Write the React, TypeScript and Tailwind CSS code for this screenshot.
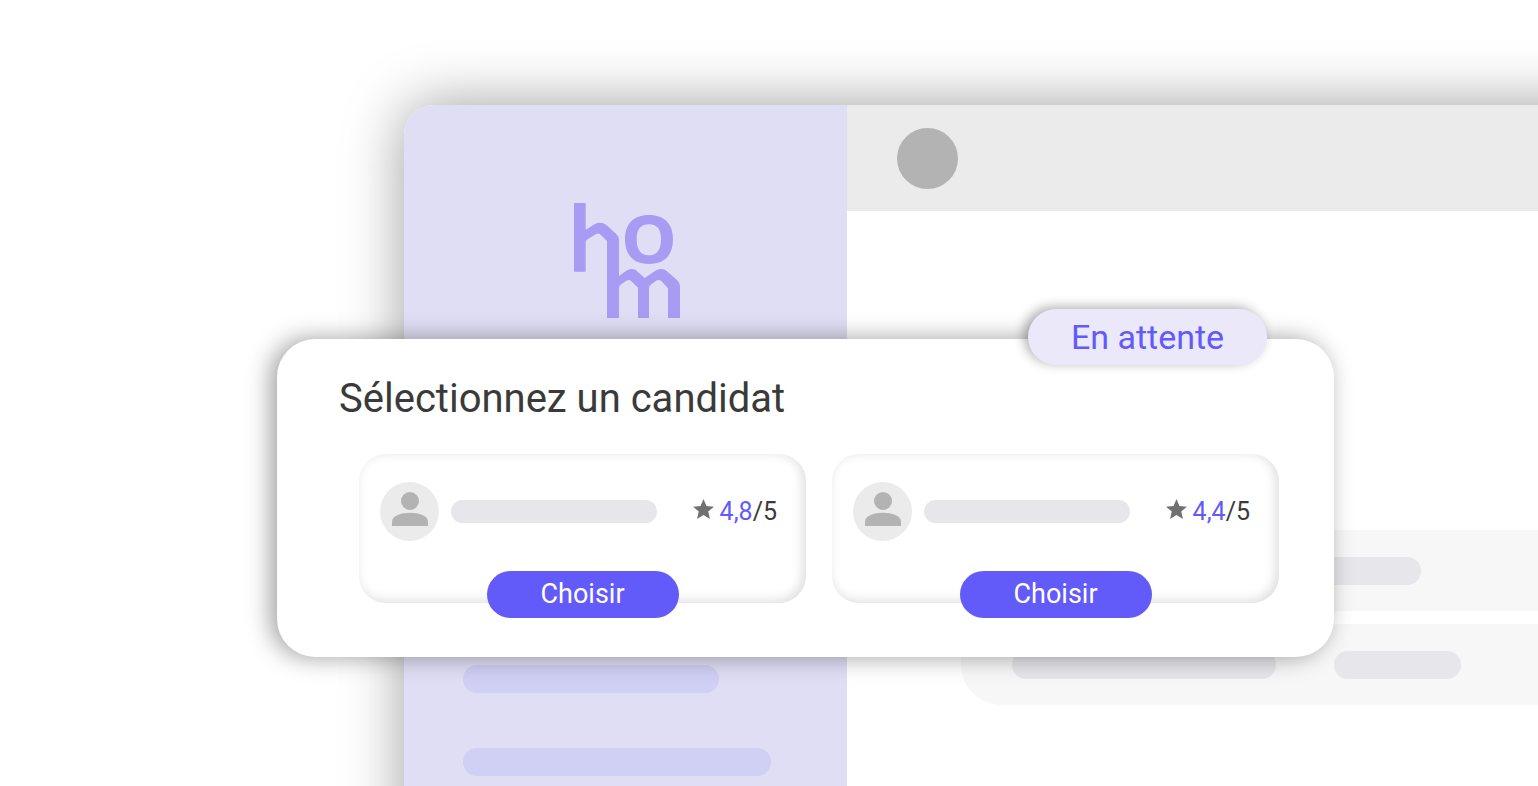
import React from 'react';
import { MdStar } from 'react-icons/md';

interface Candidate {
    id: number;
    rating: string;
}

const candidates: Candidate[] = [
    { id: 1, rating: '4,8' },
    { id: 2, rating: '4,4' },
];

function Logo() {
    return (
        <svg className="w-[106px] h-[115px] fill-[#a89bf4]" viewBox="42 39 318 345" role="img" aria-label="hom">
            <path d="M42 39H77V119L105 102Q122 94 138 104L168 131Q177 139 177 151V258L198 243Q213 232 228 241L254 264L286 242Q301 232 317 241L350 269Q360 278 360 290V384H324V295L307 276Q300 267 291 271L274 283Q267 288 267 295V384H234V293L216 275Q208 267 199 272L184 282Q177 287 177 293V384H141V153L122 134Q116 128 108 132L83 148Q77 152 77 156V245H42Z" />
            <path fillRule="evenodd" d="M267 75C314 75 339 102 339 148C339 195 314 222 267 222C220 222 195 195 195 148C195 102 220 75 267 75ZM267 103C241 103 230 119 230 148C230 179 241 196 267 196C292 196 303 179 303 148C303 119 292 103 267 103Z" />
        </svg>
    );
}

function Avatar() {
    return (
        <div className="flex h-[59px] w-[59px] shrink-0 justify-center rounded-full bg-[#ebebeb] pt-[10px]">
            <svg className="h-[34px] w-9 fill-[#b3b3b3]" viewBox="0 0 36 34" aria-hidden="true">
                <circle cx="18" cy="9" r="9" />
                <path d="M0 34V29.500C0 24 9 20.800 18 20.800S36 24 36 29.500V34Z" />
            </svg>
        </div>
    );
}

function CandidateCard({ candidate }: { candidate: Candidate }) {
    return (
        <li className="flex flex-col items-center rounded-[27px] px-[21px] pt-7 shadow-[inset_-3px_-2px_12px_rgba(0,0,0,0.14)]">
            <div className="flex w-full items-center pr-2">
                <Avatar />
                <div className="ml-3 h-[23px] flex-1 rounded-full bg-[#e6e6eb]" />
                <MdStar size={25} className="mr-1 mb-1 ml-[34px] text-[#707070]" aria-hidden="true" />
                <p className="text-[25px] leading-8 text-[#3a3a3a]">
                    <span className="text-[#625bf9]">{candidate.rating}</span>/5
                </p>
            </div>
            <button type="button" className="mt-[30px] -mb-[15px] h-[47px] w-48 rounded-full bg-[#625bf9] pb-0.5 text-[27px] leading-8 text-white">
                Choisir
            </button>
        </li>
    );
}

export default function App() {
    return (
        <div className="relative flex min-h-screen overflow-hidden bg-white pt-[105px] pl-[404px] font-['Roboto',sans-serif]">
            {/* Application window in the background, it runs off the right and bottom edges */}
            <div className="-mr-20 -mb-20 flex flex-1 rounded-tl-[30px] bg-white shadow-[0_0_60px_rgba(0,0,0,0.38)]">
                <aside className="w-[443px] shrink-0 rounded-tl-[30px] bg-[#e0def4] pt-[98px]">
                    <div className="flex justify-center pl-0.5">
                        <Logo />
                    </div>
                    <div className="mt-[347px] flex flex-col gap-[55px] pl-[59px]">
                        <div className="h-7 w-64 rounded-full bg-[#d0cff4]" />
                        <div className="h-7 w-[308px] rounded-full bg-[#d0cff4]" />
                    </div>
                </aside>
                <div className="flex-1">
                    <header className="flex h-[106px] items-center bg-[#ebebeb] pl-[50px]">
                        <div className="h-[61px] w-[61px] rounded-full bg-[#b3b3b3]" />
                    </header>
                    <main className="mt-[319px] flex flex-col gap-[13px] pl-[114px]">
                        <div className="flex h-[81px] items-center gap-[58px] rounded-tl-[40px] bg-[#f7f7f7] pl-[51px]">
                            <div className="h-7 w-56 rounded-full bg-[#e6e6eb]" />
                            <div className="h-7 w-[127px] rounded-full bg-[#e6e6eb]" />
                        </div>
                        <div className="flex h-[81px] items-center gap-[58px] rounded-bl-[40px] bg-[#f7f7f7] pl-[51px]">
                            <div className="h-7 w-[264px] rounded-full bg-[#e6e6eb]" />
                            <div className="h-7 w-[127px] rounded-full bg-[#e6e6eb]" />
                        </div>
                    </main>
                </div>
            </div>

            {/* Candidate selection panel */}
            <section className="absolute top-[339px] right-[204px] left-[277px] rounded-[38px] bg-white pt-9 pr-[55px] pb-[54px] pl-[62px] shadow-[-6px_0_24px_rgba(0,0,0,0.38)]">
                <span className="absolute -top-[30px] right-[67px] flex h-14 w-[239px] items-center justify-center rounded-full bg-[#ebe8f9] text-[34px] leading-10 text-[#625bf9] shadow-[-4px_-2px_12px_rgba(0,0,0,0.32)]">
                    En attente
                </span>
                <h1 className="text-[40px] leading-[48px] text-[#3a3a3a]">Sélectionnez un candidat</h1>
                <ul className="mt-[31px] ml-5 grid grid-cols-2 gap-[26px]">
                    {candidates.map(c => (
                        <CandidateCard key={c.id} candidate={c} />
                    ))}
                </ul>
            </section>
        </div>
    );
}
